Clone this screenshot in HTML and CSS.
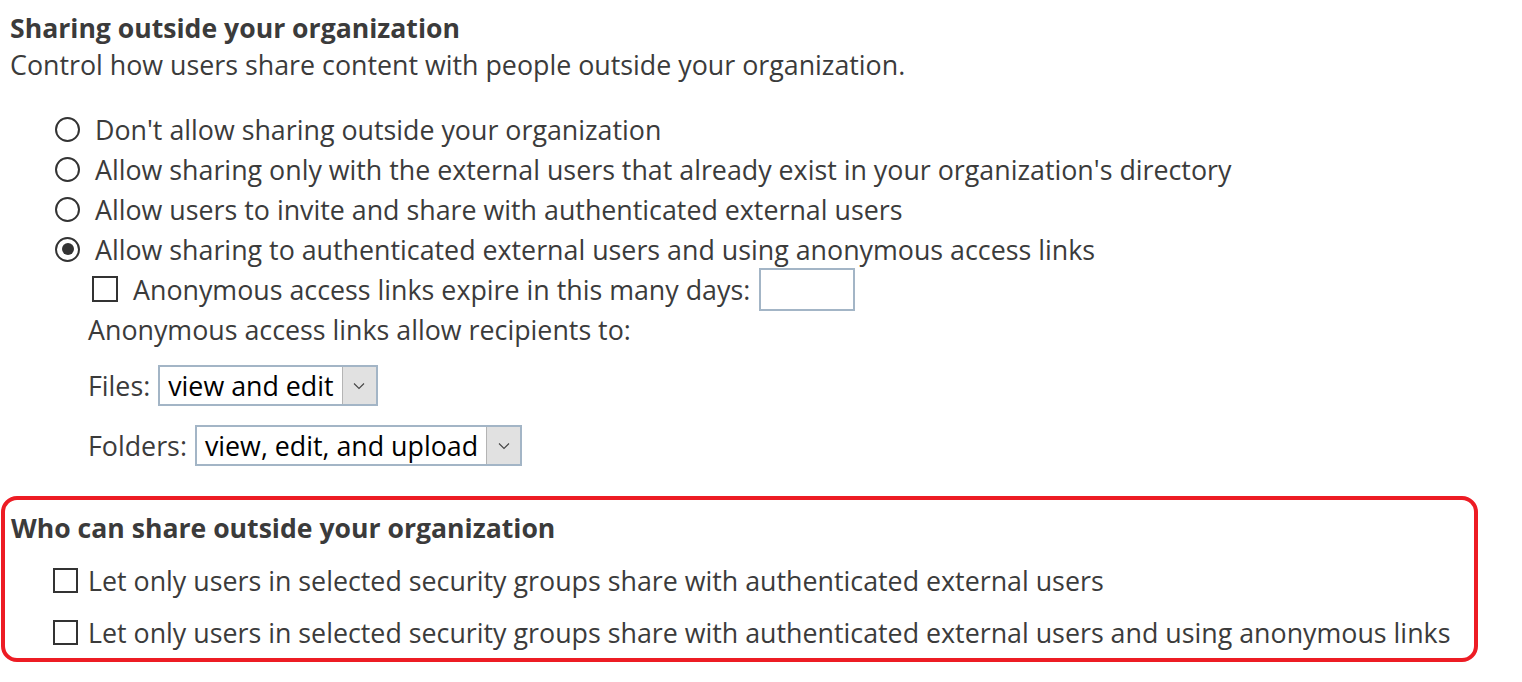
FILE: index.html
```html
<!DOCTYPE html>
<html lang="en">
<head>
    <meta charset="UTF-8">
    <meta name="viewport" content="width=device-width, initial-scale=1.0">
    <title>Sharing outside your organization</title>
    <link rel="stylesheet" href="styles.css">
</head>
<body>
    <div class="page">
        <!-- Sharing outside your organization -->
        <h2 class="section-title">Sharing outside your organization</h2>
        <p class="section-desc">Control how users share content with people outside your organization.</p>

        <div class="options">
            <label class="row"><input type="radio" name="sharing" class="radio"><span>Don't allow sharing outside your organization</span></label>
            <label class="row"><input type="radio" name="sharing" class="radio"><span>Allow sharing only with the external users that already exist in your organization's directory</span></label>
            <label class="row"><input type="radio" name="sharing" class="radio"><span>Allow users to invite and share with authenticated external users</span></label>
            <label class="row"><input type="radio" name="sharing" class="radio" checked><span>Allow sharing to authenticated external users and using anonymous access links</span></label>

            <div class="sub-options">
                <div class="row expire-row">
                    <input type="checkbox" class="check">
                    <span>Anonymous access links expire in this many days:</span>
                    <input type="text" class="days-input">
                </div>
                <div class="row anon-note">Anonymous access links allow recipients to:</div>

                <div class="field files-field">
                    <span>Files:</span>
                    <div class="select">
                        <span class="select-value">view and edit</span>
                        <span class="select-arrow">
                            <svg width="12" height="8" viewBox="0 0 12 8"><path d="M1 1.5 L6 6.5 L11 1.5" fill="none" stroke="#444" stroke-width="1.1"/></svg>
                        </span>
                    </div>
                </div>
                <div class="field folders-field">
                    <span>Folders:</span>
                    <div class="select">
                        <span class="select-value">view, edit, and upload</span>
                        <span class="select-arrow">
                            <svg width="12" height="8" viewBox="0 0 12 8"><path d="M1 1.5 L6 6.5 L11 1.5" fill="none" stroke="#444" stroke-width="1.1"/></svg>
                        </span>
                    </div>
                </div>
            </div>
        </div>

        <!-- Who can share -->
        <div class="who-box">
            <h2 class="section-title">Who can share outside your organization</h2>
            <label class="row who-row"><input type="checkbox" class="check"><span>Let only users in selected security groups share with authenticated external users</span></label>
            <label class="row who-row"><input type="checkbox" class="check"><span>Let only users in selected security groups share with authenticated external users and using anonymous links</span></label>
        </div>
    </div>
</body>
</html>
```

FILE: styles.css
```css
* {
    margin: 0;
    padding: 0;
    box-sizing: border-box;
}

body {
    font-family: 'Open Sans', 'Noto Sans', sans-serif;
    font-size: 26.8px;
    color: #3b3b3b;
    background: #fff;
}

.page {
    padding: 9px 0 0 10px;
}

.section-title {
    font-size: 26.6px;
    font-weight: bold;
    line-height: 38px;
    color: #3b3b3b;
}

.section-desc {
    line-height: 36px;
}

/* Options */
.options {
    margin-top: 26px;
    padding-left: 45px;
}

.row {
    display: flex;
    align-items: center;
    height: 40px;
    white-space: nowrap;
}

.radio {
    appearance: none;
    width: 25px;
    height: 25px;
    border: 2px solid #333;
    border-radius: 50%;
    margin-right: 15px;
    position: relative;
    flex-shrink: 0;
}

.radio:checked::after {
    content: "";
    position: absolute;
    top: 4.5px;
    left: 4.5px;
    width: 12px;
    height: 12px;
    border-radius: 50%;
    background: #333;
}

.check {
    appearance: none;
    width: 26px;
    height: 26px;
    border: 2px solid #333;
    margin-right: 15px;
    flex-shrink: 0;
}

.sub-options {
    padding-left: 37px;
}

.sub-options .anon-note {
    margin-left: -4px;
}

.days-input {
    width: 96px;
    height: 43px;
    border: 2px solid #a3b5c6;
    margin-left: 9px;
    font: inherit;
}

/* Selects */
.field {
    display: flex;
    align-items: center;
    margin-left: -4px;
}

.files-field {
    margin-top: 16px;
}

.folders-field {
    margin-top: 19px;
}

.select {
    display: flex;
    height: 41px;
    margin-left: 8px;
    border: 2px solid #a3b5c6;
    background: #fff;
}

.select-value {
    padding: 0 8px;
    color: #000;
    line-height: 37px;
}

.select-arrow {
    width: 34px;
    background: #e1e1e1;
    border-left: 1px solid #b4b4b4;
    display: flex;
    align-items: center;
    justify-content: center;
}

/* Who can share */
.who-box {
    width: 1477px;
    margin: 30px 0 0 -9px;
    border: 4px solid #ed1c24;
    border-radius: 16px;
    padding: 8px 0 6px 6px;
}

.who-box .section-title {
    line-height: 40px;
}

.who-row {
    margin-top: 12px;
    padding-left: 42px;
}

.who-row .check {
    width: 25px;
    height: 25px;
    margin-right: 10px;
}
```
